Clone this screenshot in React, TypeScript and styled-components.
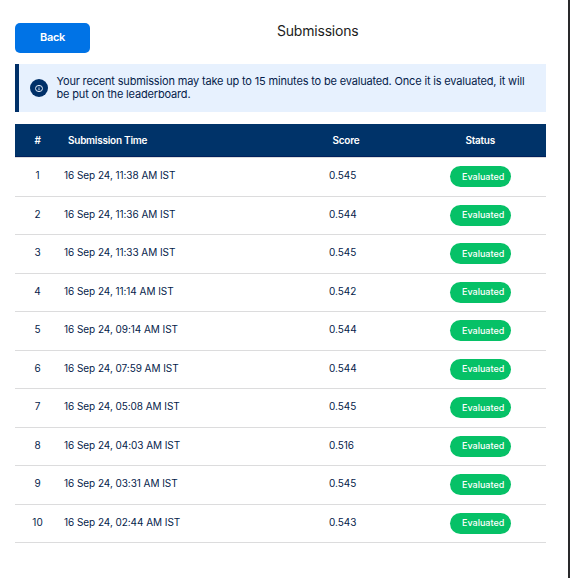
import React from "react";
import styled, { createGlobalStyle } from "styled-components";

const GlobalStyle = createGlobalStyle`
  * { box-sizing: border-box; }
  body { margin: 0; background: #fff; font-family: Inter, "Liberation Sans", sans-serif; }
`;

const Page = styled.main`
  width: 570px;
  height: 578px;
  padding: 23px 22px 0 15px;
  border-right: 2px solid #29292b;
  background: #fff;
  overflow: hidden;
`;

const TopBar = styled.header`
  display: grid;
  grid-template-columns: 75px 1fr;
  height: 41px;
`;

const BackButton = styled.button`
  height: 30px;
  padding: 0 0 2px;
  border: 0;
  border-radius: 5px;
  background: #0073e6;
  color: #fff;
  font: 600 11px/14px Inter, sans-serif;
  letter-spacing: -0.35px;
`;

const Title = styled.h1`
  margin: -1px 0 0 187px;
  color: #1c1c1c;
  font-size: 14px;
  line-height: 18px;
  font-weight: 400;
  letter-spacing: -0.2px;
  white-space: nowrap;
`;

const Notice = styled.section`
  display: flex;
  align-items: center;
  height: 48px;
  padding-left: 11px;
  border-left: 4px solid #003068;
  background: #e7f1fe;
`;

const NoticeIcon = styled.svg`
  flex: none;
  width: 18px;
  height: 18px;
`;

const NoticeText = styled.p`
  margin: 0 0 1px 8.5px;
  color: #051c4a;
  font-size: 11px;
  line-height: 13px;
  letter-spacing: -0.168px;
  white-space: nowrap;
`;

const Table = styled.div`
  margin-top: 12px;
`;

const Row = styled.div`
  display: grid;
  grid-template-columns: 45px 265px 110px 1fr;
  height: 38.5px;
  border-bottom: 1px solid #dcdcdd;
  color: #051c4a;
  font-size: 10px;
  line-height: 14px;
  letter-spacing: -0.05px;
`;

const HeadRow = styled(Row)`
  height: 34px;
  background: #003369;
  background-clip: padding-box;
  box-shadow: inset 0 -1px #00205c;
  color: #fff;
  font-weight: 600;
  letter-spacing: -0.25px;
`;

const Cell = styled.div<{ $center?: boolean; $left?: number; $top?: number }>`
  padding-top: ${({ $top = 10 }) => $top}px;
  padding-left: ${({ $left = 0 }) => $left}px;
  text-align: ${({ $center }) => ($center ? "center" : "left")};
  white-space: nowrap;
`;

const Pill = styled.span`
  display: block;
  width: 61px;
  height: 21px;
  padding: 0.75px 0 0 12px;
  border-radius: 11px;
  background: #06c167;
  color: #fff;
  font-size: 9px;
  line-height: 20px;
  font-weight: 500;
  letter-spacing: 0;
`;

const submissions = [
  ["11:38 AM", "0.545"],
  ["11:36 AM", "0.544"],
  ["11:33 AM", "0.545"],
  ["11:14 AM", "0.542"],
  ["09:14 AM", "0.544"],
  ["07:59 AM", "0.544"],
  ["05:08 AM", "0.545"],
  ["04:03 AM", "0.516"],
  ["03:31 AM", "0.545"],
  ["02:44 AM", "0.543"],
];

export default function App() {
  return (
    <Page>
      <GlobalStyle />
      <TopBar>
        <BackButton>Back</BackButton>
        <Title>Submissions</Title>
      </TopBar>
      <Notice>
        <NoticeIcon viewBox="0 0 18 18" fill="none">
          <circle cx="9" cy="9" r="9" fill="#003068" />
          <ellipse cx="9" cy="9.5" rx="3.5" ry="3.1" stroke="#e4edf9" strokeWidth="1" />
          <path d="M9 9.2v2M9 7.8v.7" stroke="#e4edf9" strokeWidth="1" />
        </NoticeIcon>
        <NoticeText>
          Your recent submission may take up to 15 minutes to be evaluated. Once it is evaluated, it will
          <br />
          be put on the leaderboard.
        </NoticeText>
      </Notice>
      <Table>
        <HeadRow>
          <Cell $center $top={9}>#</Cell>
          <Cell $left={8} $top={9}>Submission Time</Cell>
          <Cell $left={7.5} $top={9}>Score</Cell>
          <Cell $left={30.5} $top={9}>Status</Cell>
        </HeadRow>
        {submissions.map(([time, score], index) => (
          <Row key={time}>
            <Cell $center>{index + 1}</Cell>
            <Cell $left={4}>16 Sep 24, {time} IST</Cell>
            <Cell $left={4}>{score}</Cell>
            <Cell $left={15} $top={8}>
              <Pill>Evaluated</Pill>
            </Cell>
          </Row>
        ))}
      </Table>
    </Page>
  );
}
